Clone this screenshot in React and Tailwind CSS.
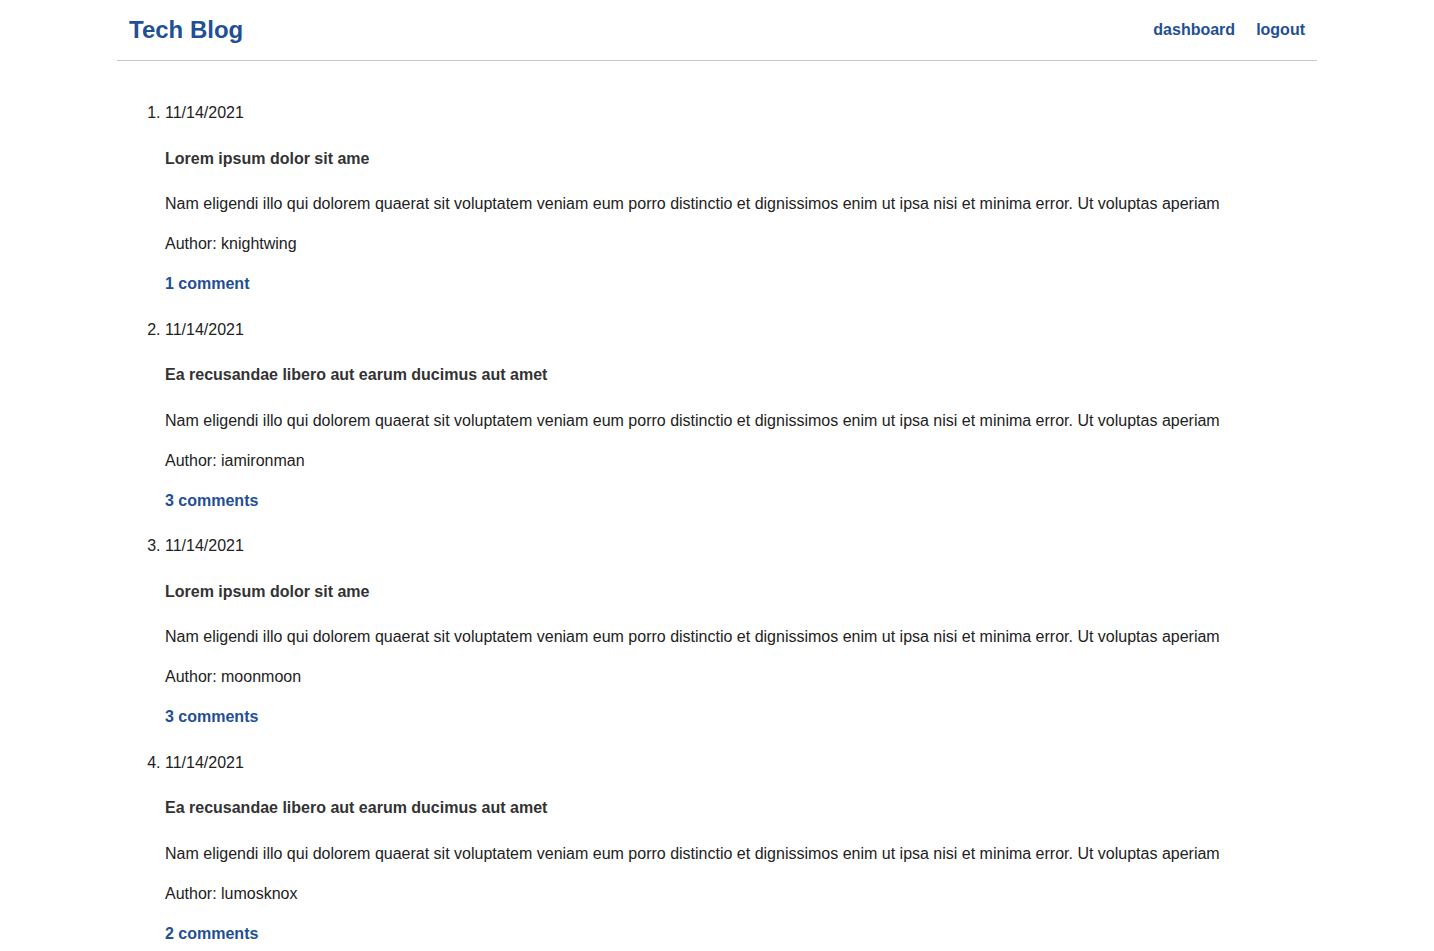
import React from "react";

const body =
  "Nam eligendi illo qui dolorem quaerat sit voluptatem veniam eum porro distinctio et dignissimos enim ut ipsa nisi et minima error. Ut voluptas aperiam";

const posts = [
  { date: "11/14/2021", title: "Lorem ipsum dolor sit ame", author: "knightwing", comments: "1 comment" },
  { date: "11/14/2021", title: "Ea recusandae libero aut earum ducimus aut amet", author: "iamironman", comments: "3 comments" },
  { date: "11/14/2021", title: "Lorem ipsum dolor sit ame", author: "moonmoon", comments: "3 comments" },
  { date: "11/14/2021", title: "Ea recusandae libero aut earum ducimus aut amet", author: "lumosknox", comments: "2 comments" },
];

export default function App() {
  return (
    <div className="min-h-screen bg-white font-['Liberation_Sans',Arial,sans-serif] text-[#222]">
      <div className="mx-auto w-[1200px]">
        <header className="flex h-[61px] items-center justify-between border-b border-[#c8c8c8] pl-3 pr-3">
          <a href="#" className="text-[24px] font-bold text-[#1f4f96]">
            Tech Blog
          </a>
          <nav className="flex gap-[21px] text-[16px] font-bold text-[#1f4f96]">
            <a href="#" className="ml-px">dashboard</a>
            <a href="#">logout</a>
          </nav>
        </header>
        <ol className="list-decimal pl-[48px] pt-[40px] text-[16px] leading-6">
          {posts.map((p, i) => (
            <li key={i} className={i > 0 ? "mt-[21.56px]" : ""}>
              <div>{p.date}</div>
              <h4 className="mt-[21.56px] font-bold text-[#333]">{p.title}</h4>
              <p className="mt-[21.56px]">{body}</p>
              <p className="mt-4">Author: {p.author}</p>
              <a href="#" className="mt-4 block font-bold text-[#1f4f96]">
                {p.comments}
              </a>
            </li>
          ))}
        </ol>
      </div>
    </div>
  );
}
